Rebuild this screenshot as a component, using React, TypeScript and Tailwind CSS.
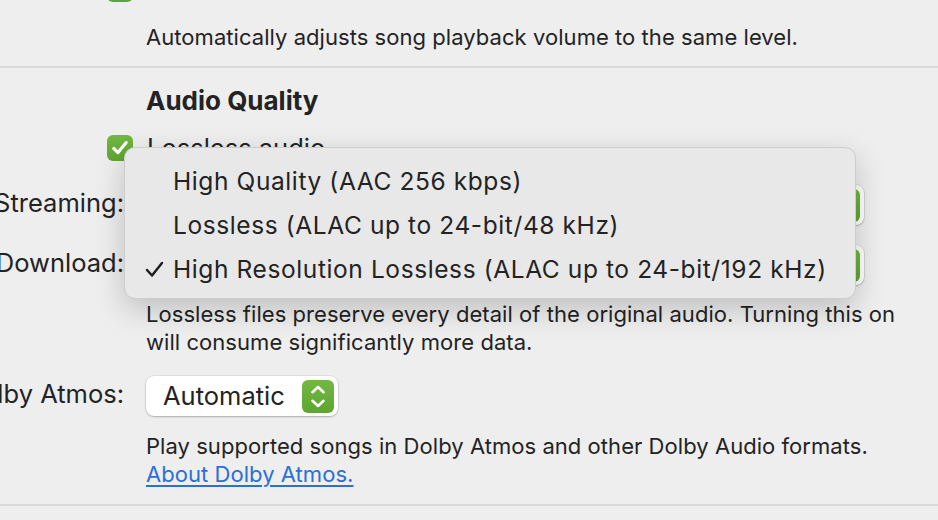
import { ReactNode } from "react";

const GREEN = "bg-[linear-gradient(#72b843,#5ea52f)]";

function Checkbox() {
  return (
    <div className={`w-[26px] h-[26px] rounded-[6px] ${GREEN} flex items-center justify-center shrink-0`}>
      <svg width="20" height="20" viewBox="0 0 20 20" fill="none">
        <path d="M3.8 10.5 L8 14.6 L16.2 4.6" stroke="white" strokeWidth="3.2" strokeLinecap="round" strokeLinejoin="round" />
      </svg>
    </div>
  );
}

function Stepper() {
  return (
    <div className={`w-[32px] h-[33px] rounded-[6px] ${GREEN} flex flex-col items-center justify-center gap-[5px] shrink-0`}>
      <svg width="16" height="9" viewBox="0 0 16 9" fill="none">
        <path d="M2.5 7.2 L8 2 L13.5 7.2" stroke="white" strokeWidth="2.6" strokeLinecap="round" strokeLinejoin="round" />
      </svg>
      <svg width="16" height="9" viewBox="0 0 16 9" fill="none">
        <path d="M2.5 1.8 L8 7 L13.5 1.8" stroke="white" strokeWidth="2.6" strokeLinecap="round" strokeLinejoin="round" />
      </svg>
    </div>
  );
}

function Select({ value, width }: { value: string; width: string }) {
  return (
    <div
      className={`${width} h-[40px] bg-white rounded-[8px] shadow-[0_0_0_0.5px_rgba(0,0,0,0.12),0_1px_2px_rgba(0,0,0,0.22)] flex items-center justify-between pl-[17px] pr-[4px]`}
    >
      <span className="text-[25.5px] leading-[40px] whitespace-nowrap">{value}</span>
      <Stepper />
    </div>
  );
}

function Row({ label, children, className }: { label: string; children: ReactNode; className?: string }) {
  return (
    <div className={`grid grid-cols-[124px_1fr] gap-x-[22px] ${className ?? ""}`}>
      <div className="flex justify-end items-center h-[40px]">
        <span className="shrink-0 whitespace-nowrap text-[25.5px] leading-[40px] -translate-y-[2px]">{label}</span>
      </div>
      <div>{children}</div>
    </div>
  );
}

function Content({ children, className }: { children: ReactNode; className?: string }) {
  return <div className={`pl-[146px] ${className ?? ""}`}>{children}</div>;
}

const menuItems = [
  { text: "High Quality (AAC 256 kbps)", checked: false },
  { text: "Lossless (ALAC up to 24-bit/48 kHz)", checked: false },
  { text: "High Resolution Lossless (ALAC up to 24-bit/192 kHz)", checked: true },
];

export default function App() {
  return (
    <div className="relative w-[938px] h-[520px] overflow-hidden bg-[#eeeeee] text-[#232323] font-['Inter',sans-serif]">
      {/* previous setting, scrolled mostly out of view */}
      <Content className="-mt-[24px]">
        <div className="-ml-[39px] flex items-center gap-[14px] h-[26px]">
          <Checkbox />
          <span className="text-[25.5px] whitespace-nowrap">Sound Check</span>
        </div>
      </Content>
      <Content className="mt-[21px]">
        <p className="text-[22px] leading-[28px] tracking-[0.05px] whitespace-nowrap">
          Automatically adjusts song playback volume to the same level.
        </p>
      </Content>

      <div className="mt-[15px] h-[2px] bg-[#d9d9d9]" />

      <Content className="mt-[17px]">
        <h2 className="text-[26px] leading-[32px] font-bold">Audio Quality</h2>
        <div className="mt-[18px] -ml-[39px] flex items-center gap-[14px] h-[26px]">
          <Checkbox />
          <span className="text-[25.5px] whitespace-nowrap">Lossless audio</span>
        </div>
      </Content>

      <Row label="Streaming:" className="mt-[24px]">
        <Select value="High Resolution Lossless (ALAC up to 24-bit/192 kHz)" width="w-[718px]" />
      </Row>
      <Row label="Download:" className="mt-[20px]">
        <Select value="High Resolution Lossless (ALAC up to 24-bit/192 kHz)" width="w-[718px]" />
      </Row>

      <Content className="mt-[15px]">
        <p className="text-[22px] leading-[28px] tracking-[0.05px] whitespace-nowrap">
          Lossless files preserve every detail of the original audio. Turning this on
          <br />
          will consume significantly more data.
        </p>
      </Content>

      <Row label="Dolby Atmos:" className="mt-[20px]">
        <Select value="Automatic" width="w-[192px]" />
      </Row>

      <Content className="mt-[16px]">
        <p className="text-[22px] leading-[28px] tracking-[0.05px] whitespace-nowrap">
          Play supported songs in Dolby Atmos and other Dolby Audio formats.
          <br />
          <a href="#" className="text-[#2b6fd8] underline underline-offset-[3px] decoration-[1.5px]">
            About Dolby Atmos.
          </a>
        </p>
      </Content>

      <div className="mt-[16px] h-[2px] bg-[#d9d9d9]" />

      {/* open popup menu */}
      <div className="absolute left-[124px] top-[147px] w-[732px] h-[152px] rounded-[11px] bg-[#e8e8e8] border border-[#cdcdcd] shadow-[0_10px_30px_rgba(0,0,0,0.2)] pt-[11px] pb-[8px]">
        {menuItems.map((item) => (
          <div key={item.text} className="h-[44px] flex items-center">
            <span className="w-[48px] flex justify-end pr-[9px]">
              {item.checked && (
                <svg width="19" height="17" viewBox="0 0 19 17" fill="none">
                  <path d="M2 9 L7 14.5 L17 2" stroke="#1f1f1f" strokeWidth="2.5" strokeLinecap="round" strokeLinejoin="round" />
                </svg>
              )}
            </span>
            <span className="text-[24.5px] leading-[44px] tracking-[0.6px] whitespace-nowrap">{item.text}</span>
          </div>
        ))}
      </div>
    </div>
  );
}
